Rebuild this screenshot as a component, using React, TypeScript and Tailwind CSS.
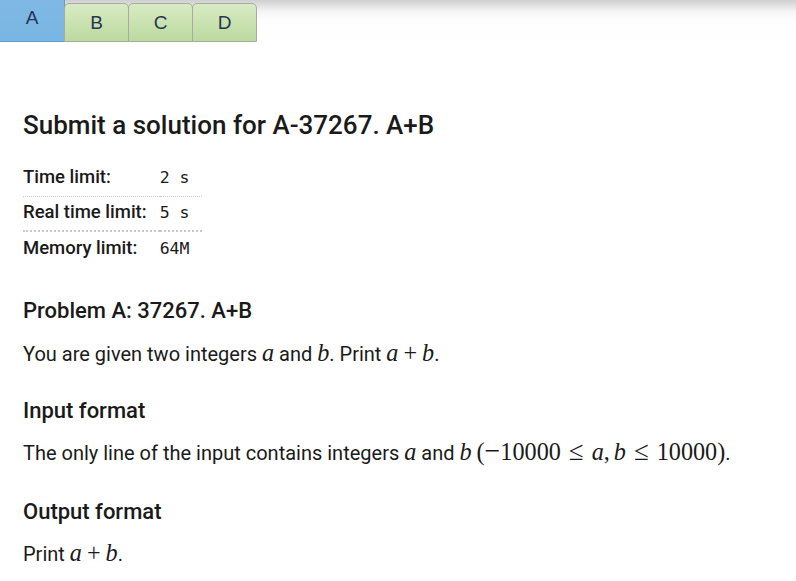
import React from "react";

const SERIF = { fontFamily: '"Liberation Serif", "DejaVu Serif", serif' };

const M = ({ children }: { children: React.ReactNode }) => (
  <span className="italic text-[1.21em] leading-[0]" style={SERIF}>
    {children}
  </span>
);
const R = ({ children, cls = "text-[1.21em]" }: { children: React.ReactNode; cls?: string }) => (
  <span className={"leading-[0] " + cls} style={SERIF}>
    {children}
  </span>
);

export default function App() {
  return (
    <div className="min-h-[581px] bg-white text-[#1a1a1a] font-['Roboto',sans-serif]">
      <div className="h-[42px] bg-[linear-gradient(#cfcfcf,#f6f6f6_12px,#fdfdfd_20px,#ffffff)] flex items-end font-['Liberation_Sans',Arial,sans-serif] text-[19px] text-[#263553]">
        <div className="w-[65px] h-[42px] bg-[linear-gradient(#7fb8e4,#7ab6e3)] border-r border-b border-[#5e9ccb] flex justify-center pt-[4px]">
          A
        </div>
        {["B", "C", "D"].map((t) => (
          <div
            key={t}
            className="w-[65px] h-[39px] -ml-px first:ml-0 rounded-t-[5px] border border-[#a7aaa5] bg-[linear-gradient(#d8ebc3,#bcd99f)] flex justify-center pt-[5px]"
          >
            {t}
          </div>
        ))}
      </div>
      <div className="px-[23px]">
        <h1 className="mt-[67px] text-[26px] leading-[32px] font-medium">Submit a solution for A-37267. A+B</h1>
        <table className="mt-[20px] text-[18.5px] font-medium">
          <tbody>
            <tr className="border-b border-dotted border-[#c8c8c8]">
              <td className="h-[35px] pr-[13px] align-middle">Time limit:</td>
              <td className="font-['DejaVu_Sans_Mono',monospace] text-[16.5px] font-normal pr-[13px] align-middle whitespace-pre">2 s</td>
            </tr>
            <tr className="border-b-2 border-dotted border-[#c8c8c8]">
              <td className="h-[35px] pr-[13px] align-middle">Real time limit:</td>
              <td className="font-['DejaVu_Sans_Mono',monospace] text-[16.5px] font-normal pr-[13px] align-middle whitespace-pre">5 s</td>
            </tr>
            <tr>
              <td className="h-[35px] pr-[13px] align-middle">Memory limit:</td>
              <td className="font-['DejaVu_Sans_Mono',monospace] text-[16.5px] font-normal pr-[13px] align-middle">64M</td>
            </tr>
          </tbody>
        </table>
        <h2 className="mt-[31px] text-[22px] leading-[28px] font-medium">Problem A: 37267. A+B</h2>
        <p className="mt-[15px] text-[20px] leading-[28px]">
          You are given two integers <M>a</M> and <M>b</M>. Print <M>a</M><R cls="text-[1.21em] mx-[5px]">+</R><M>b</M>.
        </p>
        <h3 className="mt-[29px] text-[22px] leading-[28px] font-medium">Input format</h3>
        <p className="mt-[14px] text-[20px] leading-[28px]">
          The only line of the input contains integers <M>a</M> and <M>b</M> <R>(</R><R cls="text-[1.4em]">−</R><R>10000</R><R cls="text-[1.35em] mx-[8px]">≤</R><M>a</M><R cls="text-[1.21em] mr-[4px]">,</R><M>b</M><R cls="text-[1.35em] mx-[8px]">≤</R><R>10000)</R>.
        </p>
        <h3 className="mt-[31px] text-[22px] leading-[28px] font-medium">Output format</h3>
        <p className="mt-[14px] text-[20px] leading-[28px]">
          Print <M>a</M><R cls="text-[1.21em] mx-[5px]">+</R><M>b</M>.
        </p>
      </div>
    </div>
  );
}
